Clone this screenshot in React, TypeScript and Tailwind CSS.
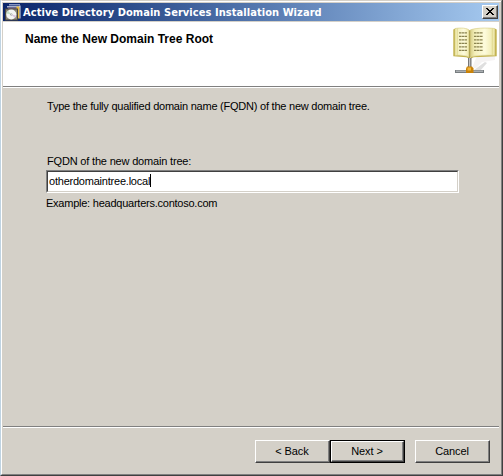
import React from "react";

function DiscIcon() {
  return (
    <svg width="17" height="17" viewBox="0 0 17 17" className="block shrink-0">
      <path d="M4 0h11v1.500H4z" fill="#8795c0" />
      <path d="M2 2h13v1.500H2z" fill="#a9b2cc" />
      <path d="M3 3.500h9v1.500H3z" fill="#7f6a8a" />
      <path d="M11.500 2.500h3v12h-1.500V5h-1.500z" fill="#e8b93c" />
      <path d="M14.500 1.500h1v13h-1z" fill="#d9dce6" />
      <rect x="0" y="4.500" width="13" height="12" fill="#4a463c" />
      <rect x="1" y="5.500" width="11" height="10" fill="#8a877a" />
      <circle cx="6.300" cy="10.500" r="5" fill="#f4f5f3" />
      <path d="M6.300 10.500 3 6.800A5 5 0 0 0 1.400 9.500z" fill="#c3e0c6" />
      <path d="M6.300 10.500l3.500 3.500a5 5 0 0 0 1.400-2.500z" fill="#d9c5e0" />
      <circle cx="6.300" cy="10.500" r="1.100" fill="#8a8a8a" />
      <circle cx="6.300" cy="10.500" r=".5" fill="#fff" />
    </svg>
  );
}

function BookIcon() {
  const rows = [32.5, 36, 39.5, 43, 46.5, 50];
  return (
    <svg width="50" height="50" viewBox="449 26 50 50" className="block">
      <defs>
        <linearGradient id="left-page" x1="0" x2="1">
          <stop offset="0" stopColor="#f0ebb0" />
          <stop offset=".6" stopColor="#fdfbdc" />
          <stop offset=".85" stopColor="#f4efba" />
          <stop offset="1" stopColor="#cfc478" />
        </linearGradient>
        <linearGradient id="right-page" x1="0" x2="1">
          <stop offset="0" stopColor="#d3c97e" />
          <stop offset=".2" stopColor="#f4efba" />
          <stop offset=".6" stopColor="#fdfbdc" />
          <stop offset="1" stopColor="#ede7a6" />
        </linearGradient>
      </defs>
      <path d="M476 58l19-12v14l-13 2-6 6h-4z" fill="#f5f3f3" />
      <path d="M474 70l11-8 2 1-7 8z" fill="#dfdfdf" />
      <path d="M453.300 29.500l2-1v26l14 2v2l-3-1.300-13-1z" fill="#c2b24c" />
      <path d="M496.700 29.500l-2-1v26l-24 2v2l3-1.300 23-1z" fill="#c2b24c" />
      <path d="M455 28.500c6-.9 12-.6 14.700 2v27c-3-2.300-9-2.500-14.700-2z" fill="url(#left-page)" stroke="#d4ca80" strokeWidth=".6" />
      <path d="M469.700 30.500c3-2.600 17-2.900 25-2v27c-9-.5-21-.3-25 2z" fill="url(#right-page)" stroke="#d4ca80" strokeWidth=".6" />
      <path d="M457.300 28.500v26.500M492.300 28.500v26.500" stroke="#ddd48c" strokeWidth=".8" />
      <path d="M469.700 30.500v27.500" stroke="#a99c48" strokeWidth="1" />
      {rows.map((y) => (
        <g key={y} fill="none" stroke="#8a8350" strokeWidth="1.200" strokeDasharray="2.600 .4">
          <path d={`M459 ${y + 0.3}h8`} />
          <path d={`M474 ${y + 0.3}h9`} />
        </g>
      ))}
      <path d="M468 58h3.500v9H468z" fill="#777" />
      <path d="M469 58h1.200v9H469z" fill="#c4c4c4" />
      <path d="M455 70h29v3h-29z" fill="#777d80" />
      <path d="M456 70.600h27v1.200h-27z" fill="#b8bcbe" />
      <path d="M467 66.500h5l1.500 2v4.500h-7.500v-4.500z" fill="#c98208" />
      <path d="M467.500 67.500h3.500v3h-3.500z" fill="#f3b63a" />
    </svg>
  );
}

function Separator() {
  return <div className="h-[2px] shrink-0 border-b border-white bg-[#808080]" />;
}

function Button({ children, primary }: { children: React.ReactNode; primary?: boolean }) {
  const face = (
    <span className="flex h-full w-full border border-t-white border-r-[#404040] border-b-[#404040] border-l-white">
      <span className="flex h-full w-full items-center justify-center border-r border-b border-[#808080] tracking-[-0.1px]">
        {children}
      </span>
    </span>
  );
  return (
    <button className={primary ? "h-[23px] w-[75px] border border-black" : "h-[23px] w-[75px]"}>{face}</button>
  );
}

export default function App() {
  return (
    <div className="flex h-[476px] w-[503px] border-r border-b border-l border-r-[#404040] border-b-[#404040] border-l-[#bfd3e2] bg-[#d4d0c8] font-['Liberation_Sans',Arial,sans-serif] text-[11px] leading-[14px] text-black">
      <div className="flex w-full flex-col border-t border-r border-b border-l border-t-[#d4d0c8] border-r-[#808080] border-b-[#808080] border-l-white">
        <div className="flex grow flex-col border-t border-t-white pr-[2px] pl-px">
          <div className="mt-px flex h-[18px] shrink-0 items-center bg-linear-to-r from-[#0a246a] to-[#a6caf0] pr-px pl-[2px]">
            <DiscIcon />
            <span className="ml-px pt-[2px] font-['DejaVu_Sans_Condensed','DejaVu_Sans',sans-serif] text-[11px] font-bold tracking-[0.06px] whitespace-nowrap text-white [font-stretch:condensed]">
              Active Directory Domain Services Installation Wizard
            </span>
            <button className="ml-auto flex h-[14px] w-4 border border-t-white border-r-[#404040] border-b-[#404040] border-l-white bg-[#d4d0c8]">
              <span className="flex h-full w-full items-center justify-center border-r border-b border-[#808080]">
                <svg width="8" height="7" viewBox="0 0 8 7" shapeRendering="crispEdges">
                  <path d="M0 0h2v1h1v1h2V1h1V0h2v1H7v1H6v1H5v1h1v1h1v1h1v1H6V6H5V5H3v1H2v1H0V6h1V5h1V4h1V3H2V2H1V1H0z" />
                </svg>
              </span>
            </button>
          </div>
          <div className="mt-px flex h-[64px] shrink-0 items-start justify-between bg-white pl-[22px]">
            <h1 className="mt-[10px] text-[12px] leading-[14px] font-bold whitespace-nowrap">
              Name the New Domain Tree Root
            </h1>
            <div className="mt-1">
              <BookIcon />
            </div>
          </div>
          <Separator />
          <main className="flex grow flex-col items-start pt-[11px] pl-[43px] whitespace-nowrap">
            <p className="pl-px tracking-[-0.23px]">Type the fully qualified domain name (FQDN) of the new domain tree.</p>
            <label className="mt-[41px] pl-px tracking-[-0.18px]">FQDN of the new domain tree:</label>
            <div className="mt-[2px] h-[23px] w-[413px] border border-t-[#808080] border-r-white border-b-white border-l-[#808080]">
              <div className="flex h-full items-center border border-t-[#404040] border-r-[#d4d0c8] border-b-[#d4d0c8] border-l-[#404040] bg-white pb-[2px] pl-px">
                <span className="tracking-[-0.22px]">otherdomaintree.local</span>
                <span className="h-[13px] w-px bg-black" />
              </div>
            </div>
            <p className="mt-[3px] tracking-[-0.24px]">Example: headquarters.contoso.com</p>
          </main>
          <Separator />
          <footer className="flex h-[46px] shrink-0 justify-end pt-3 pr-[9px]">
            <Button>&lt; Back</Button>
            <Button primary>Next &gt;</Button>
            <div className="ml-[10px] flex">
              <Button>Cancel</Button>
            </div>
          </footer>
        </div>
      </div>
    </div>
  );
}
